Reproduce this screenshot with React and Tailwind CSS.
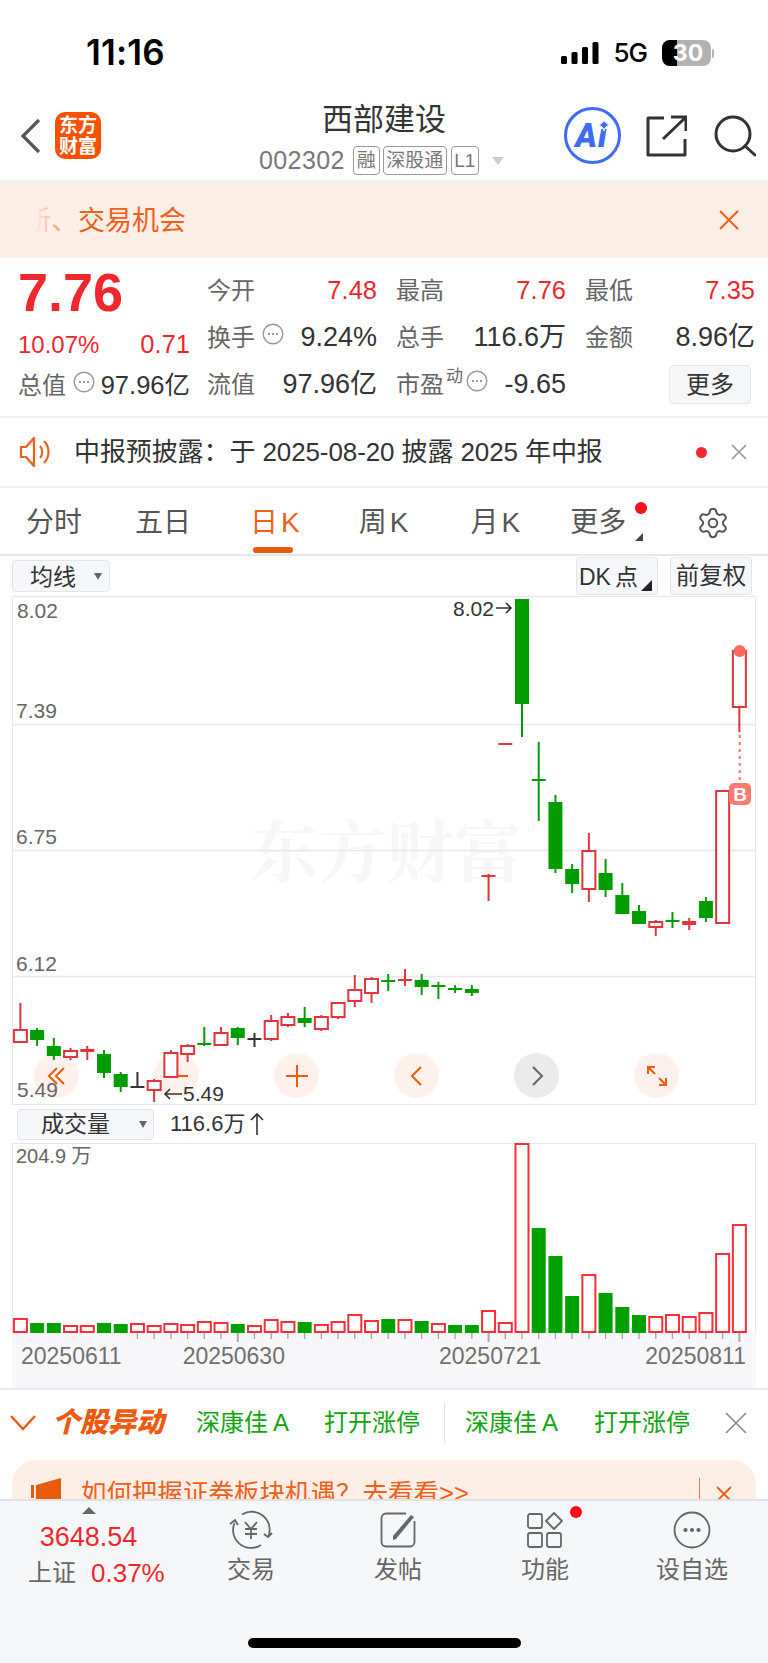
import { Settings } from 'lucide-react';

const RED = '#e0353d';
const GREEN = '#009c00';

// high, body top, body bottom, low, kind (r hollow, g filled, f red filled, d doji)
const CANDLES = [
  [1003, 1030, 1042, 1043, 'r'], [1028, 1030, 1040, 1046, 'g'], [1038, 1046, 1056, 1060, 'g'], [1048, 1051, 1057, 1060, 'r'],
  [1046, 1049, 1052, 1060, 'f'], [1050, 1054, 1073, 1078, 'g'], [1072, 1074, 1087, 1092, 'g'], [1072, 1087, 1087, 1088, 'k'],
  [1079, 1081, 1090, 1102, 'r'], [1050, 1053, 1077, 1078, 'r'], [1044, 1046, 1054, 1062, 'r'], [1027, 1044, 1044, 1046, 'c'],
  [1027, 1033, 1045, 1045, 'r'], [1027, 1028, 1038, 1045, 'g'], [1033, 1039, 1039, 1047, 'k'], [1015, 1021, 1039, 1041, 'r'],
  [1013, 1017, 1025, 1027, 'r'], [1007, 1018, 1023, 1027, 'g'], [1015, 1017, 1029, 1031, 'r'], [1003, 1003, 1017, 1019, 'r'],
  [975, 990, 1001, 1007, 'r'], [977, 979, 993, 1003, 'r'], [974, 981, 981, 991, 'c'], [969, 980, 980, 986, 'd'],
  [974, 980, 987, 995, 'g'], [982, 986, 986, 999, 'c'], [985, 989, 989, 993, 'c'], [985, 989, 993, 996, 'g'],
  [874, 875, 877, 901, 'f'], [744, 744, 744, 744, 'd'], [599, 599, 704, 737, 'g'], [742, 780, 780, 821, 'c'],
  [795, 802, 869, 873, 'g'], [864, 869, 884, 893, 'g'], [833, 851, 889, 902, 'r'], [859, 873, 890, 897, 'g'],
  [883, 895, 914, 914, 'g'], [905, 911, 924, 924, 'g'], [920, 922, 927, 936, 'r'], [912, 921, 921, 928, 'c'],
  [918, 921, 925, 930, 'f'], [897, 901, 918, 922, 'g'], [791, 791, 923, 924, 'r'], [651, 651, 707, 732, 'r'],
];

// bar tops, full page px
const VOLUMES = [
  [1319, 'r'], [1323, 'g'], [1323, 'g'], [1326, 'r'], [1326, 'r'], [1323, 'g'], [1324, 'g'], [1324, 'r'], [1326, 'r'], [1324, 'r'], [1325, 'r'],
  [1322, 'r'], [1323, 'r'], [1324, 'g'], [1326, 'r'], [1320, 'r'], [1322, 'r'], [1322, 'g'], [1325, 'r'], [1322, 'r'], [1315, 'r'], [1321, 'r'],
  [1319, 'g'], [1320, 'r'], [1321, 'g'], [1324, 'r'], [1325, 'g'], [1325, 'g'], [1311, 'r'], [1323, 'r'], [1144, 'r'], [1228, 'g'], [1256, 'g'],
  [1296, 'g'], [1275, 'r'], [1293, 'g'], [1307, 'g'], [1315, 'g'], [1317, 'r'], [1315, 'r'], [1317, 'r'], [1313, 'r'], [1254, 'r'], [1225, 'r'],
];

const cx = (i) => 20.4 + 16.72 * i;

function InfoDot({ className = '' }) {
  return (
    <svg width="22" height="22" viewBox="0 0 22 22" className={className}>
      <circle cx="11" cy="11" r="9.8" fill="none" stroke="#999" strokeWidth="1.4" />
      <circle cx="7" cy="11" r="1" fill="#777" />
      <circle cx="11" cy="11" r="1" fill="#777" />
      <circle cx="15" cy="11" r="1" fill="#777" />
    </svg>
  );
}

function Candle({ c, i }) {
  const [high, top, bot, low, kind] = c;
  const x = cx(i);
  const col = kind === 'g' || kind === 'c' ? GREEN : kind === 'k' ? '#333' : RED;
  if (top === bot) {
    return (
      <g stroke={col} strokeWidth="2" fill="none">
        <line x1={x} x2={x} y1={high} y2={low} />
        <line x1={x - 7} x2={x + 7} y1={top} y2={top} />
      </g>
    );
  }
  return (
    <g>
      <line x1={x} x2={x} y1={high} y2={low} stroke={col} strokeWidth="2" />
      {kind === 'r' ? (
        <rect x={x - 6.5} y={top} width="13" height={bot - top} fill="#fff" stroke={col} strokeWidth="2" />
      ) : (
        <rect x={x - 7} y={top} width="14" height={bot - top} fill={col} />
      )}
    </g>
  );
}

function CircleBtn({ grey, children }) {
  return (
    <div className={`w-[45px] h-[45px] rounded-full flex items-center justify-center ${grey ? 'bg-[#ebebeb]' : 'bg-[#fef1eb]'}`}>
      {children}
    </div>
  );
}

function Icon({ children }) {
  return (
    <svg width="24" height="24" viewBox="0 0 24 24" fill="none" stroke="#f05a0e" strokeWidth="2">
      {children}
    </svg>
  );
}

function QuoteCell({ label, value, red, extra }) {
  return (
    <div className="flex items-center justify-between h-[47px]">
      <span className="text-[#666] flex items-center">{label}{extra}</span>
      <span className={red ? 'text-[25.5px] text-[#f0282d]' : 'text-[27px] text-[#333]'}>{value}</span>
    </div>
  );
}

function Tag({ children, className = '' }) {
  return (
    <span className={`h-[29px] flex items-center justify-center border border-[#999] rounded-[4px] text-[19px] leading-none text-[#777] ${className}`}>
      {children}
    </span>
  );
}

function NavItem({ label, className = '', children }) {
  return (
    <div className={`flex flex-col items-center w-[100px] ${className}`}>
      <div className="h-[46px] flex items-center justify-center relative">{children}</div>
      <span className="mt-[3px] text-[24px] leading-[28px] text-[#666]">{label}</span>
    </div>
  );
}

export default function App() {
  return (
    <div className="w-[768px] h-[1663px] overflow-hidden bg-white flex flex-col font-['Liberation_Sans','Noto_Sans_CJK_SC',sans-serif]">
      {/* status bar */}
      <div className="h-[102px] shrink-0 flex items-start">
        <span className="ml-[86px] mt-[33px] text-[35px] leading-[38px] font-semibold text-black font-['Inter',sans-serif] tracking-[0.2px]">11:16</span>
        <div className="ml-auto mr-[54px] mt-[40px] flex items-center h-[26px]">
          <svg width="38" height="22" viewBox="0 0 38 22" fill="#000">
            <rect x="0" y="14" width="6" height="8" rx="1.5" />
            <rect x="10.5" y="10" width="6" height="12" rx="1.5" />
            <rect x="21" y="5" width="6" height="17" rx="1.5" />
            <rect x="31.5" y="0" width="6" height="22" rx="1.5" />
          </svg>
          <span className="ml-[14px] text-[26px] leading-none font-medium text-black font-['Inter',sans-serif] tracking-[-1px]">5G</span>
          <div className="relative ml-[15px] w-[49px] h-[26px] rounded-[8px] overflow-hidden bg-[#b2b2b2] flex">
            <div className="w-[15px] bg-black" />
            <span className="absolute inset-0 flex items-center justify-center pl-[3px] text-[23px] font-bold text-white font-['Inter',sans-serif]">30</span>
          </div>
          <div className="w-[2px] h-[9px] ml-[1px] rounded-r bg-[#b2b2b2]" />
        </div>
      </div>

      {/* header */}
      <div className="h-[78px] shrink-0 flex items-start relative">
        <svg width="22" height="36" viewBox="0 0 22 36" className="ml-[20px] mt-[16px]" fill="none" stroke="#555" strokeWidth="3.2">
          <path d="M19 2 3 18l16 16" />
        </svg>
        <div className="ml-[13px] mt-[10px] w-[46px] h-[47px] rounded-[10px] bg-[#ff5000] flex flex-col items-center justify-center text-white text-[19px] leading-[21px] font-bold">
          <span>东方</span>
          <span>财富</span>
        </div>
        <div className="absolute left-[259px] top-0 w-[260px] flex flex-col">
          <span className="w-[250px] text-center text-[31px] leading-[36px] text-[#333]">西部建设</span>
          <div className="flex items-center mt-[8px]">
            <span className="text-[25px] leading-[29px] text-[#777] tracking-[0.4px] mr-[8px]">002302</span>
            <Tag className="w-[27px]">融</Tag>
            <Tag className="ml-[3px] w-[64px]">深股通</Tag>
            <Tag className="ml-[4px] w-[28px] font-normal">L1</Tag>
            <span className="ml-[13px] w-0 h-0 border-x-[6px] border-x-transparent border-t-[8px] border-t-[#ccc]" />
          </div>
        </div>
        <div className="ml-auto mr-[12px] flex items-center mt-[5px]">
          <div className="relative w-[57px] h-[57px] rounded-full border-[3px] border-[#3d6cf5] flex items-center justify-center">
            <span className="text-[#3d6cf5] text-[33px] leading-none font-black italic font-['Roboto',sans-serif] tracking-[1px] -mt-[1px] -ml-[2px]">Ai</span>
            <svg width="12" height="12" viewBox="0 0 12 12" className="absolute right-[8px] top-[9px]" fill="#3d6cf5" stroke="#fff" strokeWidth="1">
              <path d="M6 0c.6 3.2 2 5 6 6-4 1-5.400 2.800-6 6-.6-3.200-2-5-6-6 4-1 5.400-2.800 6-6z" />
            </svg>
          </div>
          <svg width="42" height="42" viewBox="0 0 42 42" className="ml-[24px]" fill="none" stroke="#333" strokeWidth="3">
            <path d="M19 3H3v37h37V24" strokeLinejoin="round" />
            <path d="M18 24 40 3M26 2h15v14" />
          </svg>
          <svg width="42" height="42" viewBox="0 0 42 42" className="ml-[27px]" fill="none" stroke="#333" strokeWidth="3">
            <circle cx="19" cy="19" r="17" />
            <path d="m31 31 10 9" strokeLinecap="round" />
          </svg>
        </div>
      </div>

      {/* banner */}
      <div className="h-[78px] shrink-0 bg-[#fdeee6] border-t-2 border-[#efefef] relative flex items-center overflow-hidden">
        <span className="ml-[24px] mt-[2px] text-[27px] text-[#f0601a]">新、交易机会</span>
        <div className="absolute left-0 top-0 bottom-0 w-[78px] bg-gradient-to-r from-[#fdeee6] from-45% to-transparent" />
        <svg width="22" height="22" viewBox="0 0 22 22" className="ml-auto mr-[28px]" stroke="#f0601a" strokeWidth="2">
          <path d="m2 2 18 18M20 2 2 20" />
        </svg>
      </div>

      {/* quote */}
      <div className="h-[160px] shrink-0 border-b-2 border-[#eeeeee] flex text-[24px] leading-none">
        <div className="w-[207px] shrink-0 pl-[18px] pr-[17px]">
          <div className="h-[66px] flex items-center text-[54px] leading-none font-bold text-[#f0282d] mt-[1px]">7.76</div>
          <div className="flex justify-between items-center h-[46px] text-[#f0282d] -mt-[3px]">
            <span className="text-[24px]">10.07%</span>
            <span className="text-[25.5px]">0.71</span>
          </div>
          <div className="flex justify-between items-center h-[46px] -mt-[5px]">
            <span className="flex items-center text-[#666]">总值<InfoDot className="ml-[7px] -mt-[8px]" /></span>
            <span className="text-[25.5px] text-[#333]">97.96亿</span>
          </div>
        </div>
        <div className="flex-1 grid grid-cols-[170px_170px_170px] gap-x-[19px] pt-[9px] content-start">
          <QuoteCell label="今开" value="7.48" red />
          <QuoteCell label="最高" value="7.76" red />
          <QuoteCell label="最低" value="7.35" red />
          <QuoteCell label="换手" value="9.24%" extra={<InfoDot className="ml-[7px] -mt-[8px]" />} />
          <QuoteCell label="总手" value="116.6万" />
          <QuoteCell label="金额" value="8.96亿" />
          <QuoteCell label="流值" value="97.96亿" />
          <QuoteCell
            label="市盈"
            value="-9.65"
            extra={
              <span className="flex items-center -mt-[8px]">
                <span className="ml-[2px] text-[17px] text-[#666] -mt-[8px]">动</span>
                <InfoDot className="ml-[3px]" />
              </span>
            }
          />
          <div className="flex items-center h-[47px] justify-end">
            <div className="w-[82px] h-[39px] mr-[4px] flex items-center justify-center rounded-[4px] border border-[#e3e5ea] bg-[#f6f7f9] text-[#333]">更多</div>
          </div>
        </div>
      </div>

      {/* notice */}
      <div className="h-[70px] shrink-0 border-b-2 border-[#eeeeee] flex items-center">
        <svg width="34" height="34" viewBox="0 0 34 34" className="ml-[19px]" fill="none" stroke="#f0601a" strokeWidth="2.2">
          <path d="M2 12h5l8-9v28l-8-9H2z" strokeLinejoin="round" />
          <path d="M21 11c3 3 3 9 0 12M25 6c6 6 6 16 0 22" />
        </svg>
        <span className="ml-[21px] text-[26px] tracking-[-0.1px] text-[#333]">中报预披露：于 2025-08-20 披露 2025 年中报</span>
        <span className="ml-auto w-[11px] h-[11px] rounded-full bg-[#f0282d]" />
        <svg width="16" height="16" viewBox="0 0 16 16" className="ml-[24px] mr-[21px]" stroke="#999" strokeWidth="1.6">
          <path d="m1 1 14 14M15 1 1 15" />
        </svg>
      </div>

      {/* tabs */}
      <div className="h-[68px] shrink-0 border-b-2 border-[#e8e8e8] flex items-start pt-[17px] text-[28px] leading-[36px] text-[#555]">
        <span className="ml-[26px]">分时</span>
        <span className="ml-[53px]">五日</span>
        <div className="ml-[59px] relative text-[#f0601a]">
          <span>日<span className="ml-[3px]">K</span></span>
          <div className="absolute left-[3px] top-[42px] w-[40px] h-[6px] rounded-full bg-[#e85b0c]" />
        </div>
        <span className="ml-[59px]">周<span className="ml-[3px]">K</span></span>
        <span className="ml-[62px]">月<span className="ml-[3px]">K</span></span>
        <div className="ml-[50px] relative">
          <span>更多</span>
          <span className="absolute -right-[21px] top-[-3px] w-[12px] h-[12px] rounded-full bg-[#fa0f1e]" />
          <span className="absolute -right-[17px] top-[28px] w-0 h-0 border-l-[8px] border-l-transparent border-b-[8px] border-b-[#444]" />
        </div>
        <Settings size={34} strokeWidth={1.4} color="#555" className="ml-auto mr-[38px] mt-[1px]" />
      </div>

      {/* kline toolbar */}
      <div className="h-[40px] shrink-0 flex items-end pb-[1px] text-[23px] leading-none text-[#333]">
        <div className="ml-[12px] mb-[3px] w-[98px] h-[32px] flex items-center rounded-[4px] border border-[#e3e5ea] bg-[#f6f7fa]">
          <span className="ml-[17px] mt-[2px]">均线</span>
          <span className="ml-[18px] w-0 h-0 border-x-[4px] border-x-transparent border-t-[7px] border-t-[#666]" />
        </div>
        <div className="ml-auto relative w-[82px] h-[38px] flex items-center pl-[2px] pt-[2px] rounded-[4px] border border-[#e3e5ea] bg-[#f6f7fa]">
          <span>DK<span className="ml-[4px]">点</span></span>
          <span className="absolute right-[5px] bottom-[3px] w-0 h-0 border-l-[11px] border-l-transparent border-b-[11px] border-b-[#222]" />
        </div>
        <div className="ml-[12px] mr-[16px] w-[82px] h-[38px] flex items-center justify-center pt-[2px] rounded-[4px] border border-[#e3e5ea] bg-[#f6f7fa] text-[23.5px]">前复权</div>
      </div>

      {/* kline chart */}
      <div className="ml-[12px] w-[744px] h-[509px] shrink-0 relative border border-[#e6e7ee] text-[21px] leading-none">
        <span className="absolute left-[237px] top-[217px] whitespace-nowrap text-[68px] leading-none font-bold text-[#f6f6f6] font-['Noto_Serif_CJK_SC','Noto_Sans_CJK_SC',sans-serif]">东方财富</span>
        <div className="absolute left-[21px] top-[456px] flex gap-[75px]">
          <CircleBtn>
            <Icon><path d="M12 4 4 12l8 8M19 4l-8 8 8 8" /></Icon>
          </CircleBtn>
          <CircleBtn>
            <Icon><path d="M1 12h22" /></Icon>
          </CircleBtn>
          <CircleBtn>
            <Icon><path d="M12 1v22M1 12h22" /></Icon>
          </CircleBtn>
          <CircleBtn>
            <Icon><path d="m16 3-9 9 9 9" /></Icon>
          </CircleBtn>
          <CircleBtn grey>
            <svg width="24" height="24" viewBox="0 0 24 24" fill="none" stroke="#666" strokeWidth="2"><path d="m8 3 9 9-9 9" /></svg>
          </CircleBtn>
          <CircleBtn>
            <Icon><path d="M3 10V3h7M3 3l7 7M21 14v7h-7M21 21l-7-7" /></Icon>
          </CircleBtn>
        </div>
        <svg className="absolute -left-px -top-px" width="744" height="510" viewBox="12 596 744 510">
          <line x1="13" x2="755" y1="724.5" y2="724.5" stroke="#e6e8f0" strokeWidth="1.5" />
          <line x1="13" x2="755" y1="850.5" y2="850.5" stroke="#e6e8f0" strokeWidth="1.5" />
          <line x1="13" x2="755" y1="976.5" y2="976.5" stroke="#e6e8f0" strokeWidth="1.5" />
          {CANDLES.map((c, i) => <Candle key={i} c={c} i={i} />)}
          <line x1="739.7" x2="739.7" y1="735" y2="783" stroke="#f07070" strokeWidth="2" strokeDasharray="3 4" />
          <circle cx="739.7" cy="651" r="6" fill="#ff6a60" />
          <path d="M496 608h15M506 603l5 5-5 5" fill="none" stroke="#333" strokeWidth="1.6" />
          <path d="M182 1094h-17M170 1089l-5 5 5 5" fill="none" stroke="#333" strokeWidth="1.6" />
        </svg>
        <span className="absolute left-[4px] top-[3px] text-[#666]">8.02</span>
        <span className="absolute left-[3px] top-[103px] text-[#666]">7.39</span>
        <span className="absolute left-[3px] top-[229px] text-[#666]">6.75</span>
        <span className="absolute left-[3px] top-[356px] text-[#666]">6.12</span>
        <span className="absolute left-[4px] top-[482px] text-[#666]">5.49</span>
        <span className="absolute left-[440px] top-[1px] text-[#333]">8.02</span>
        <span className="absolute left-[170px] top-[486px] text-[#333]">5.49</span>
        <span className="absolute left-[716px] top-[186px] w-[22px] h-[22px] rounded-[5px] bg-[#ff7b72] flex items-center justify-center text-[19px] font-bold text-white">B</span>
      </div>

      {/* volume toolbar */}
      <div className="h-[38px] shrink-0 flex items-center text-[23px] leading-none text-[#333]">
        <div className="ml-[17px] w-[137px] h-[31px] flex items-center rounded-[4px] border border-[#e3e5ea] bg-[#f6f7fa]">
          <span className="ml-[23px]">成交量</span>
          <span className="ml-[29px] w-0 h-0 border-x-[4px] border-x-transparent border-t-[7px] border-t-[#666]" />
        </div>
        <span className="ml-[16px] text-[22px]">116.6万</span>
        <svg width="14" height="24" viewBox="0 0 14 24" className="ml-[5px]" fill="none" stroke="#333" strokeWidth="1.6">
          <path d="M7 23V2M1 8l6-6 6 6" />
        </svg>
      </div>

      {/* volume chart */}
      <div className="ml-[12px] w-[744px] h-[190px] shrink-0 relative border-x border-t border-[#e6e7ee]">
        <span className="absolute left-[3px] top-[2px] text-[20px] leading-none text-[#666]">204.9 万</span>
        <svg className="absolute -left-px -top-px" width="744" height="190" viewBox="12 1143 744 190">
          {VOLUMES.map(([top, kind], i) =>
            kind === 'g' ? (
              <rect key={i} x={cx(i) - 7} y={top} width="14" height={1333 - top} fill="#00a000" />
            ) : (
              <rect key={i} x={cx(i) - 6.5} y={top} width="13" height={1332 - top} fill="#fff" stroke="#ff2d37" strokeWidth="2" />
            )
          )}
        </svg>
      </div>

      {/* date axis */}
      <div className="ml-[12px] w-[744px] h-[55px] shrink-0 relative bg-[#f7f7f9] text-[23px] leading-none text-[#707070]">
        <svg className="absolute left-0 top-0" width="744" height="12" viewBox="12 1333 744 12">
          {CANDLES.map((c, i) =>
            i < 7 ? null : (
              <line key={i} x1={cx(i)} x2={cx(i)} y1="1333" y2={i === 13 || i === 28 || i === 43 ? 1342 : 1339} stroke="#aaa" strokeWidth={i === 13 || i === 28 || i === 43 ? 2 : 1.4} />
            )
          )}
        </svg>
        <div className="flex pt-[12px]">
          <span className="ml-[9px]">20250611</span>
          <span className="ml-[61px]">20250630</span>
          <span className="ml-[154px]">20250721</span>
          <span className="ml-[104px]">20250811</span>
        </div>
      </div>

      {/* stock moves */}
      <div className="h-[72px] shrink-0 border-t-2 border-[#eaeaf0] flex items-center pb-[4px] text-[24px] leading-none text-[#11a611]">
        <svg width="26" height="16" viewBox="0 0 26 16" className="ml-[10px]" fill="none" stroke="#f05a0e" strokeWidth="2.4">
          <path d="m1 1 12 13L25 1" />
        </svg>
        <span className="ml-[16px] w-[114px] text-[28px] font-black italic text-[#f05a0e] whitespace-nowrap">个股异动</span>
        <span className="ml-[30px]">深康佳<span className="ml-[5px]">A</span></span>
        <span className="ml-[35px]">打开涨停</span>
        <span className="ml-[24px] w-[1px] h-[40px] bg-[#e3e3e3]" />
        <span className="ml-[20px]">深康佳<span className="ml-[5px]">A</span></span>
        <span className="ml-[36px]">打开涨停</span>
        <svg width="22" height="22" viewBox="0 0 22 22" className="ml-auto mr-[21px]" stroke="#888" strokeWidth="1.6">
          <path d="m1 1 20 20M21 1 1 21" />
        </svg>
      </div>

      {/* ad strip, cut off by the bottom bar */}
      <div className="mx-[12px] h-[39px] shrink-0 rounded-t-[24px] bg-[#fdeee6] flex items-start overflow-hidden text-[25.5px] leading-[32px] text-[#f0601a]">
        <svg width="32" height="30" viewBox="0 0 32 30" className="ml-[19px] mt-[18px]" fill="#ea5a0c">
          <path d="M0 7h3v13H0zM5 7 30 0v30H9l-4-8z" />
        </svg>
        <span className="ml-[18px] mt-[17px] whitespace-nowrap">如何把握证券板块机遇？</span>
        <span className="ml-[1px] mt-[17px] whitespace-nowrap">去看看&gt;&gt;</span>
        <span className="ml-auto mt-[18px] w-[1px] h-[30px] bg-[#e9794a]" />
        <svg width="16" height="16" viewBox="0 0 16 16" className="ml-[16px] mr-[24px] mt-[26px]" stroke="#f0601a" strokeWidth="2">
          <path d="m1 1 14 14M15 1 1 15" />
        </svg>
      </div>

      {/* bottom nav */}
      <div className="relative flex-1 border-t-2 border-[#e2e2e6] bg-[#f6f7f9] flex items-start">
        <div className="w-[177px] shrink-0 flex flex-col items-center pt-[6px]">
          <span className="w-0 h-0 border-x-[7px] border-x-transparent border-b-[7px] border-b-[#666]" />
          <span className="mt-[8px] text-[27px] leading-[30px] text-[#f0282d]">3648.54</span>
          <div className="flex items-center mt-[6px] text-[24px] leading-[30px] pl-[18px] w-full">
            <span className="text-[#666] ml-[10px]">上证</span>
            <span className="ml-[15px] text-[26px] text-[#f0282d]">0.37%</span>
          </div>
        </div>
        <div className="flex pt-[6px] ml-[24px] gap-[47px]">
          <NavItem label="交易">
            <svg width="44" height="44" viewBox="0 0 44 44" fill="none" stroke="#666" strokeWidth="1.8">
              <path d="M5.500 15A18 18 0 0 0 32 37M13 6.500A18 18 0 0 1 39.500 28" />
              <path d="m1 16 5-4 3 5M43 25l-4 4-4-3" />
              <path d="m16 14 6 7 6-7M22 21v10M16 21h12M16 26h12" />
            </svg>
          </NavItem>
          <NavItem label="发帖">
            <svg width="36" height="36" viewBox="0 0 36 36" fill="none" stroke="#666" strokeWidth="1.8">
              <path d="M26 1.500H6A4.500 4.500 0 0 0 1.500 6v24A4.500 4.500 0 0 0 6 34.500h24a4.500 4.500 0 0 0 4.500-4.500V9" />
              <path d="M13 24 31 3l3 2-18 22-3 1z" fill="#666" stroke="none" />
            </svg>
          </NavItem>
          <NavItem label="功能">
            <svg width="36" height="36" viewBox="0 0 36 36" fill="none" stroke="#666" strokeWidth="1.8">
              <rect x="1" y="2" width="14" height="14" rx="2" />
              <rect x="1" y="21" width="14" height="14" rx="2" />
              <rect x="20" y="21" width="14" height="14" rx="2" />
              <path d="m27 1 8 8-8 8-8-8z" strokeLinejoin="round" />
            </svg>
            <span className="absolute left-[43px] top-[-1px] w-[12px] h-[12px] rounded-full bg-[#fa0f1e]" />
          </NavItem>
          <NavItem label="设自选">
            <svg width="38" height="38" viewBox="0 0 38 38" fill="none" stroke="#666" strokeWidth="1.8">
              <circle cx="19" cy="19" r="17.500" />
              <circle cx="12.500" cy="19" r="1.200" fill="#666" />
              <circle cx="19" cy="19" r="1.200" fill="#666" />
              <circle cx="25.500" cy="19" r="1.200" fill="#666" />
            </svg>
          </NavItem>
        </div>
        <div className="absolute left-[248px] top-[137px] w-[273px] h-[10px] rounded-full bg-black" />
      </div>
    </div>
  );
}
